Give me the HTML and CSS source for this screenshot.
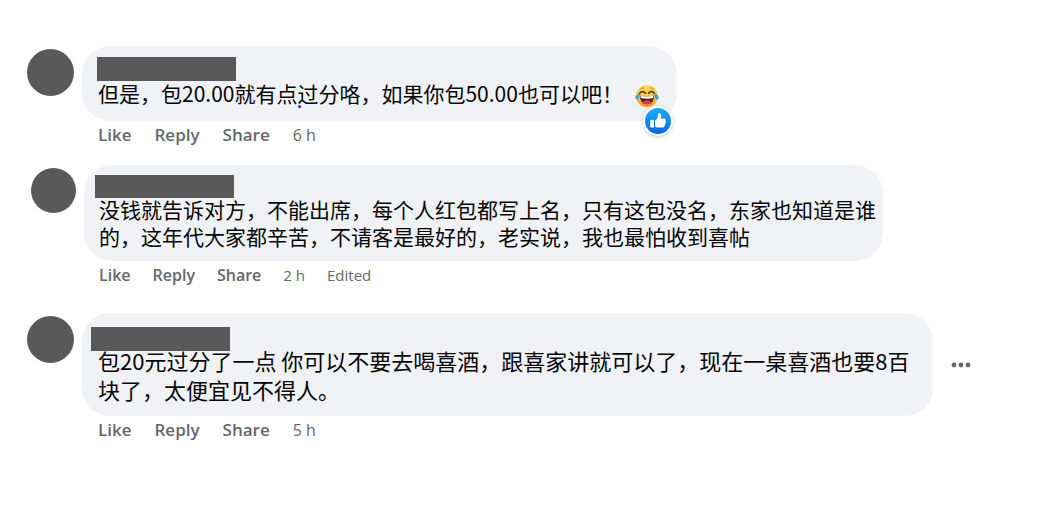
FILE: index.html
```html
<!DOCTYPE html>
<html lang="zh-Hans">
<head>
    <meta charset="UTF-8">
    <meta name="viewport" content="width=device-width, initial-scale=1.0">
    <title>Comments</title>
    <link rel="stylesheet" href="styles.css">
</head>
<body>
    <main class="comments">
        <article class="comment">
            <div class="avatar"></div>
            <div class="comment-body">
                <div class="bubble">
                    <div class="name"></div>
                    <p class="text">但是，包20.00就有点<span class="marker"></span>过分咯，如果你包50.00也可以吧！<svg class="emoji" viewBox="0 0 24 24" role="img" aria-label="Face with tears of joy">
                        <defs>
                            <linearGradient id="face" x1="0" y1="0" x2="0" y2="1">
                                <stop offset="0" stop-color="#ffdf5b"/>
                                <stop offset="0.6" stop-color="#fbbd3c"/>
                                <stop offset="1" stop-color="#f58a27"/>
                            </linearGradient>
                        </defs>
                        <circle cx="12" cy="12" r="11" fill="url(#face)"/>
                        <path d="M5 5.5 Q6.5 3.5 9 3.8 M15 3.8 Q17.5 3.5 19 5.5" fill="none" stroke="#c9822b" stroke-width="1" stroke-linecap="round"/>
                        <path d="M4.5 9.5 Q7.5 5.5 10.5 9.3 M13.5 9.3 Q16.5 5.5 19.5 9.5" fill="none" stroke="#4a3420" stroke-width="1.5" stroke-linecap="round"/>
                        <path d="M5 11.5 Q12 13.5 19 11.5 Q19 20 12 20.3 Q5 20 5 11.5Z" fill="#5b1b20"/>
                        <path d="M5.5 11.6 Q12 13.5 18.5 11.6 L18 14 Q12 15.3 6 14Z" fill="#fff"/>
                        <path d="M7.5 18 Q12 14.8 16.5 18 Q14.5 20.2 12 20.3 Q9.5 20.2 7.5 18Z" fill="#f0384f"/>
                        <path d="M4.8 10 Q0.2 10.3 0.3 14 Q1 16.5 3.3 15 Q4.8 13.5 4.8 10Z M19.2 10 Q23.8 10.3 23.7 14 Q23 16.5 20.7 15 Q19.2 13.5 19.2 10Z" fill="#2fa8e8"/>
                    </svg></p>
                    <button type="button" class="reaction" aria-label="1 like">
                        <svg viewBox="0 0 26 26" aria-hidden="true">
                            <defs>
                                <linearGradient id="thumb" x1="0" y1="0" x2="0" y2="1">
                                    <stop offset="0" stop-color="#18aefe"/>
                                    <stop offset="1" stop-color="#0467e2"/>
                                </linearGradient>
                            </defs>
                            <circle cx="13" cy="13" r="13" fill="url(#thumb)"/>
                            <rect x="5.2" y="11.8" width="3.8" height="7.8" rx="0.9" fill="#fff"/>
                            <path d="M10 12.3 C12 11.3 13 9.6 12.9 7.2 C12.8 5.6 13.4 5.2 14.2 5.3 C16.2 5.5 16.6 8.1 15.6 10.5 H19 C20.6 10.5 21.2 12 20.4 13 C21.3 14 21 15 20.2 15.5 C20.7 16.5 20.3 17.3 19.4 17.7 C19.6 18.8 18.7 19.5 17.5 19.5 H14 C12.3 19.5 11 19 10 18.4Z" fill="#fff"/>
                        </svg>
                    </button>
                </div>
                <div class="actions">
                    <a href="#">Like</a>
                    <a href="#">Reply</a>
                    <a href="#">Share</a>
                    <time>6 h</time>
                </div>
            </div>
        </article>

        <article class="comment comment-small">
            <div class="avatar"></div>
            <div class="comment-body">
                <div class="bubble">
                    <div class="name"></div>
                    <p class="text">没钱就告诉对方，不能出席，每个人红包都写上名，只有这包没名，东家也知道是谁的，这年代大家都辛苦，不请客是最好的，老实说，我也最怕收到喜帖</p>
                </div>
                <div class="actions">
                    <a href="#">Like</a>
                    <a href="#">Reply</a>
                    <a href="#">Share</a>
                    <time>2 h</time>
                    <span>Edited</span>
                </div>
            </div>
        </article>

        <article class="comment comment-large">
            <div class="avatar"></div>
            <div class="comment-body">
                <div class="bubble">
                    <div class="name"></div>
                    <p class="text">包20元过分了一点 你可以不要去喝喜酒，跟喜家讲就可以了，现在一桌喜酒也要8百块了，太便宜见不得人。</p>
                </div>
                <div class="actions">
                    <a href="#">Like</a>
                    <a href="#">Reply</a>
                    <a href="#">Share</a>
                    <time>5 h</time>
                </div>
            </div>
            <button type="button" class="more" aria-label="More">
                <svg viewBox="0 0 20 6" aria-hidden="true">
                    <circle cx="3" cy="3" r="2.4"/>
                    <circle cx="10" cy="3" r="2.4"/>
                    <circle cx="17" cy="3" r="2.4"/>
                </svg>
            </button>
        </article>
    </main>
</body>
</html>
```
FILE: styles.css
```css
body {
    margin: 0;
    background-color: #fff;
    color: #050505;
    font-family: "Noto Sans CJK SC", sans-serif;
}
button {
    border: none;
    padding: 0;
    cursor: pointer;
}
svg {
    display: block;
}
.comments {
    display: flex;
    flex-direction: column;
    gap: 20px;
    padding: 46px 30px 46px 27px;
}
.comment {
    display: flex;
    align-items: flex-start;
    gap: 8px;
}
.avatar {
    flex: none;
    width: 47px;
    height: 47px;
    margin-top: 3px;
    border-radius: 50%;
    background-color: #595959;
}
.comment-body {
    min-width: 0;
}
.bubble {
    position: relative;
    width: fit-content;
    padding: 11px 18px 14px 16px;
    border-radius: 28px;
    background-color: #f0f2f5;
}
.name {
    width: 139px;
    height: 24px;
    margin: 0 0 -2px -1px;
    background-color: #595959;
}
.text {
    margin: 0;
    font-size: 21px;
    line-height: 28px;
}
.marker {
    position: relative;
}
.marker::after {
    content: "";
    position: absolute;
    left: 1px;
    bottom: 0;
    width: 3px;
    height: 3px;
    border-radius: 50%;
    background-color: #2222ff;
}
.emoji {
    display: inline-block;
    width: 24px;
    height: 24px;
    margin: -4px 0 -4px 12px;
    vertical-align: middle;
}
.reaction {
    position: absolute;
    right: 4px;
    bottom: -15px;
    width: 30px;
    height: 30px;
    padding: 2px;
    border-radius: 50%;
    background-color: #fff;
    box-shadow: 0 1px 4px rgba(0, 0, 0, 0.2);
}
.actions {
    display: flex;
    gap: 23px;
    margin-top: 4px;
    padding-left: 16px;
    color: #65676b;
    font-family: "Open Sans", sans-serif;
    font-size: 16px;
    line-height: 20px;
}
.actions a {
    color: #65676b;
    font-size: 17px;
    font-weight: 600;
    text-decoration: none;
}

/* smaller comment */
.comment-small {
    padding-left: 4px;
}
.comment-small .avatar {
    width: 45px;
    height: 45px;
}
.comment-small .comment-body {
    max-width: 81%;
}
.comment-small .bubble {
    padding: 10px 4px 11px 15px;
}
.comment-small .name {
    height: 23px;
    margin: 0 0 -2px -4px;
}
.comment-small .text {
    line-height: 27px;
}
.comment-small .actions {
    gap: 22px;
    padding-left: 15px;
    font-size: 15px;
}
.comment-small .actions a {
    font-size: 16px;
}

/* larger comment with the menu */
.comment-large {
    margin-top: 8px;
}
.comment-large .comment-body {
    max-width: 86%;
}
.comment-large .bubble {
    padding: 14px 20px 12px 16px;
}
.comment-large .name {
    margin: 0 0 -5px -7px;
}
.comment-large .text {
    position: relative;
    font-size: 22px;
    line-height: 29px;
}
.more {
    flex: none;
    width: 40px;
    height: 103px;
    padding: 0 10px;
    background: none;
    fill: #65676b;
}
```
